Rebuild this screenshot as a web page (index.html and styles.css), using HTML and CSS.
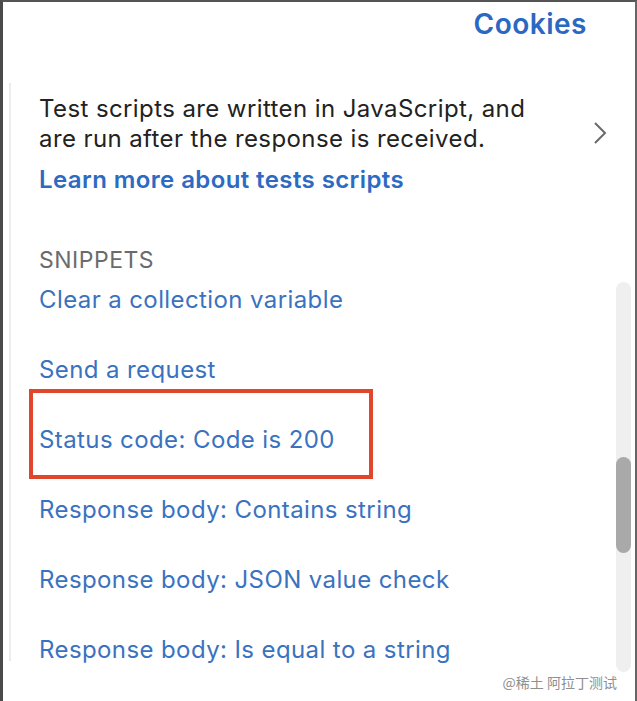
FILE: index.html
```html
<!DOCTYPE html>
<html lang="en">
<head>
<meta charset="utf-8">
<title>Tests</title>
<link rel="stylesheet" href="styles.css">
</head>
<body>
<div class="frame">
  <header class="topbar">
    <span class="cookies">Cookies</span>
  </header>
  <section class="panel">
    <div class="intro">
      <p class="desc">Test scripts are written in JavaScript, and<br>are run after the response is received.</p>
      <svg class="chev" width="14" height="24" viewBox="0 0 14 24"><path d="M2 2 L12 12 L2 22" fill="none" stroke="#6a6a6a" stroke-width="2"/></svg>
    </div>
    <a class="learn">Learn more about tests scripts</a>
    <h3 class="label">SNIPPETS</h3>
    <ul class="snippets">
      <li>Clear a collection variable</li>
      <li>Send a request</li>
      <li class="marked">Status code: Code is 200</li>
      <li>Response body: Contains string</li>
      <li>Response body: JSON value check</li>
      <li>Response body: Is equal to a string</li>
    </ul>
    <div class="scrolltrack"><div class="thumb"></div></div>
  </section>
  <div class="watermark">@稀土 阿拉丁测试</div>
</div>
</body>
</html>
```

FILE: styles.css
```css
*, *::before, *::after { box-sizing: border-box; }
html, body { margin: 0; padding: 0; background: #fff; }
body { font-family: Inter, "Noto Sans", "Noto Sans CJK SC", sans-serif; }
.frame {
  position: relative;
  width: 637px;
  height: 701px;
  border-left: 3px solid #4a4a4a;
  border-top: 2px solid #555;
  border-right: 2px solid #666;
  overflow: hidden;
}
.topbar {
  display: flex;
  justify-content: flex-end;
  height: 81px;
  padding: 5px 48px 0 0;
}
.cookies {
  font-size: 28px;
  font-weight: 600;
  color: #2a68c2;
  line-height: 34px;
  letter-spacing: 0.5px;
}
.panel {
  position: relative;
  margin-left: 6px;
  height: 578px;
  border-left: 2px solid #ececec;
  padding: 11px 0 0 28px;
}
.intro {
  display: flex;
  align-items: center;
  justify-content: space-between;
  padding-right: 28px;
}
.desc {
  margin: 0;
  font-size: 24px;
  line-height: 30px;
  color: #222;
  letter-spacing: 0.4px;
}
.chev { margin-top: 18px; }
.learn {
  display: block;
  margin-top: 12px;
  font-size: 24px;
  line-height: 28px;
  font-weight: 600;
  color: #2d6ac2;
  letter-spacing: 0.4px;
}
.label {
  margin: 54px 0 0;
  font-size: 23px;
  line-height: 24px;
  font-weight: 400;
  color: #6b6b6b;
  letter-spacing: 0.5px;
}
.snippets {
  list-style: none;
  margin: 14px 0 0;
  padding: 0;
  display: flex;
  flex-direction: column;
  gap: 42px;
}
.snippets li {
  font-size: 24px;
  line-height: 28px;
  color: #3a72c0;
  letter-spacing: 0.4px;
}
.marked { position: relative; }
.marked::after {
  content: "";
  position: absolute;
  left: -10px;
  top: -37px;
  width: 344px;
  height: 90px;
  border: 4px solid #e0462c;
}
.scrolltrack {
  position: absolute;
  right: 4px;
  top: 199px;
  width: 15px;
  height: 390px;
  background: #efefef;
  border-radius: 8px;
}
.thumb {
  margin-top: 175px;
  height: 96px;
  background: #a9a9a9;
  border-radius: 8px;
}
.watermark {
  position: absolute;
  right: 18px;
  top: 670px;
  font-size: 14px;
  color: #8f8f8f;
  font-family: "Noto Sans CJK SC", sans-serif;
}
```
